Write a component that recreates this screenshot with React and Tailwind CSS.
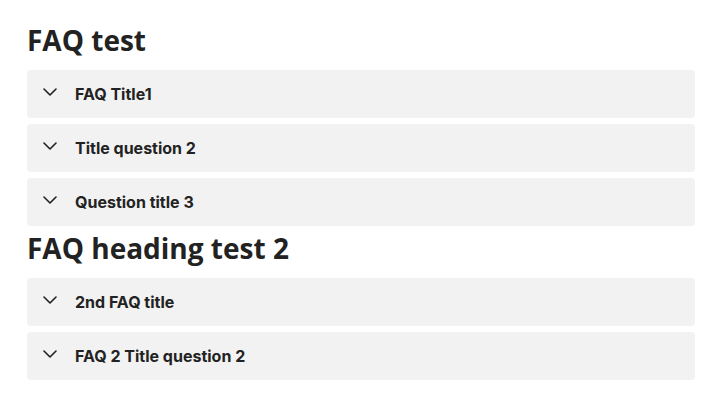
const sections = [
  { heading: 'FAQ test', items: ['FAQ Title1', 'Title question 2', 'Question title 3'] },
  { heading: 'FAQ heading test 2', items: ['2nd FAQ title', 'FAQ 2 Title question 2'] },
];

function Chevron() {
  return (
    <svg width="14" height="8" viewBox="0 0 14 8" fill="none" className="shrink-0 -translate-y-[2px]">
      <path d="M1 1l6 6 6-6" stroke="#222" strokeWidth="1.6" strokeLinecap="round" strokeLinejoin="round" />
    </svg>
  );
}

export default function App() {
  return (
    <div className="flex min-h-[405px] flex-col gap-[2px] bg-white pl-[27px] pr-[31px] pt-[20px] text-[#222]">
      {sections.map((s) => (
        <section key={s.heading}>
          <h2 className="mb-[10px] text-[28px] font-bold leading-[40px]" style={{ fontFamily: '"Open Sans", Lato, sans-serif' }}>
            {s.heading}
          </h2>
          <div className="flex flex-col gap-[6px]">
            {s.items.map((t) => (
              <div key={t} className="flex h-[48px] items-center gap-[18px] rounded bg-[#f2f2f2] pl-[16px]">
                <Chevron />
                <span className="text-[16px] font-bold" style={{ fontFamily: 'Inter, sans-serif' }}>{t}</span>
              </div>
            ))}
          </div>
        </section>
      ))}
    </div>
  );
}
